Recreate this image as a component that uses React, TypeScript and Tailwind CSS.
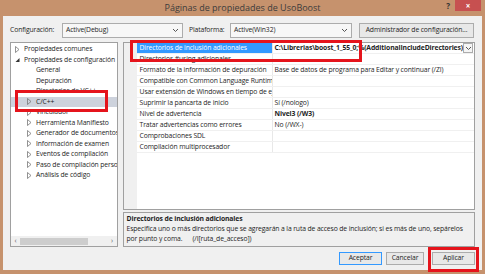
import React from "react";

const font = { fontFamily: '"Open Sans", "Liberation Sans", sans-serif' };

function Chevron() {
  return (
    <svg width="7" height="5" viewBox="0 0 7 5" className="shrink-0">
      <path d="M1 1 L3.5 3.5 L6 1" fill="none" stroke="#555" strokeWidth="1" />
    </svg>
  );
}

function Collapsed() {
  return (
    <svg width="5" height="7" viewBox="0 0 5 7" className="shrink-0">
      <path d="M0.5 0.5 L4 3.5 L0.5 6.5 Z" fill="none" stroke="#777" strokeWidth="0.8" />
    </svg>
  );
}

function Expanded() {
  return (
    <svg width="5" height="7" viewBox="0 0 5 7" className="shrink-0">
      <path d="M4.5 2 L4.5 6 L0.5 6 Z" fill="#333" />
    </svg>
  );
}

const treeItems: { label: string; level: number; kind?: "c" | "e"; selected?: boolean }[] = [
  { label: "Propiedades comunes", level: 0, kind: "c" },
  { label: "Propiedades de configuración", level: 0, kind: "e" },
  { label: "General", level: 1 },
  { label: "Depuración", level: 1 },
  { label: "Directorios de VC++", level: 1 },
  { label: "C/C++", level: 1, kind: "c", selected: true },
  { label: "Vinculador", level: 1, kind: "c" },
  { label: "Herramienta Manifiesto", level: 1, kind: "c" },
  { label: "Generador de documentos XML", level: 1, kind: "c" },
  { label: "Información de examen", level: 1, kind: "c" },
  { label: "Eventos de compilación", level: 1, kind: "c" },
  { label: "Paso de compilación personalizada", level: 1, kind: "c" },
  { label: "Análisis de código", level: 1, kind: "c" },
];

const rows: { name: string; value?: string; bold?: boolean }[] = [
  { name: "Directorios de inclusión adicionales", value: "C:\\Librerias\\boost_1_55_0;%(AdditionalIncludeDirectories)", bold: true },
  { name: "Directorios #using adicionales" },
  { name: "Formato de la información de depuración", value: "Base de datos de programa para Editar y continuar (/ZI)" },
  { name: "Compatible con Common Language Runtime" },
  { name: "Usar extensión de Windows en tiempo de ejecución" },
  { name: "Suprimir la pancarta de inicio", value: "Sí (/nologo)" },
  { name: "Nivel de advertencia", value: "Nivel3 (/W3)", bold: true },
  { name: "Tratar advertencias como errores", value: "No (/WX-)" },
  { name: "Comprobaciones SDL" },
  { name: "Compilación multiprocesador" },
];

export default function App() {
  return (
    <div
      className="relative w-[485px] h-[274px] bg-[#c6926d] px-[3px] pb-[4px] flex flex-col text-[6.8px] tracking-[-0.12px] text-[#1e1e1e] overflow-hidden"
      style={font}
    >
      {/* title bar */}
      <div className="relative h-[16px] shrink-0 flex items-center justify-center">
        <span className="text-[9px] tracking-normal text-[#3c3c3c]">Páginas de propiedades de UsoBoost</span>
        <span className="absolute right-[32px] top-[0px] text-[8px] font-bold text-[#333]">?</span>
        <div className="absolute right-[1px] top-0 w-[26px] h-[11px] bg-[#c75050] flex items-center justify-center">
          <span className="text-white text-[8px] font-bold leading-none">×</span>
        </div>
      </div>

      {/* dialog body */}
      <div className="flex-1 bg-[#f0f0f0] flex flex-col px-[7px] pt-[7px]">
        {/* configuration row */}
        <div className="flex items-center h-[15px]">
          <span className="w-[52px] shrink-0">Configuración:</span>
          <div className="w-[121px] h-[15px] bg-[#f7f7f7] border border-[#acacac] flex items-center justify-between pl-[3px] pr-[3px]">
            <span>Active(Debug)</span>
            <Chevron />
          </div>
          <span className="ml-[6px] w-[41px] shrink-0">Plataforma:</span>
          <div className="w-[122px] h-[15px] bg-[#f7f7f7] border border-[#acacac] flex items-center justify-between pl-[3px] pr-[3px]">
            <span>Active(Win32)</span>
            <Chevron />
          </div>
          <div className="ml-[7px] w-[115px] h-[15px] bg-[#e8e8e8] border border-[#acacac] flex items-center justify-center whitespace-nowrap">
            Administrador de configuración...
          </div>
        </div>

        {/* main area */}
        <div className="flex mt-[4px] gap-[5px]">
          {/* tree */}
          <div className="w-[108px] h-[205px] bg-white border border-[#a0a0a0] flex flex-col overflow-hidden">
            <div className="flex-1 pt-[1px] overflow-hidden">
              {treeItems.map((t) => (
                <div
                  key={t.label}
                  className={`h-[10.5px] flex items-center whitespace-nowrap ${t.selected ? "bg-[#cdd2dc]" : ""}`}
                  style={{ paddingLeft: t.level === 0 ? 4 : 16 }}
                >
                  <span className="w-[9px] shrink-0 flex items-center">
                    {t.kind === "c" ? <Collapsed /> : t.kind === "e" ? <Expanded /> : null}
                  </span>
                  <span className="shrink-0">{t.label}</span>
                </div>
              ))}
            </div>
            <div className="h-[10px] flex items-center bg-[#f0f0f0] shrink-0">
              <span className="w-[9px] text-center text-[7px] text-[#606060]">‹</span>
              <div className="w-[68px] h-[7px] bg-[#cdcdcd]" />
              <div className="flex-1" />
              <span className="w-[9px] text-center text-[7px] text-[#606060]">›</span>
            </div>
          </div>

          {/* grid + description */}
          <div className="w-[354px] flex flex-col gap-[2px]">
            <div className="h-[168px] bg-white border border-[#a0a0a0] flex overflow-hidden">
              <div className="w-[13px] bg-[#f0f0f0] shrink-0" />
              <div className="flex-1 flex flex-col">
                {rows.map((r, i) => (
                  <div key={r.name} className="h-[11px] flex border-b border-[#f0f0f0]">
                    <div
                      className={`w-[136px] shrink-0 border-r border-[#e8e8e8] pl-[3px] flex items-center whitespace-nowrap overflow-hidden ${
                        i === 0 ? "bg-[#3399ff] text-white" : ""
                      }`}
                    >
                      {r.name}
                    </div>
                    <div className="flex-1 flex items-center pl-[2px] whitespace-nowrap overflow-hidden">
                      <span className={r.bold ? "font-bold" : ""}>{r.value ?? ""}</span>
                      {i === 0 && (
                        <div className="ml-auto mr-[1px] w-[10px] h-[10px] border border-[#acacac] bg-[#f5f5f5] flex items-center justify-center shrink-0">
                          <Chevron />
                        </div>
                      )}
                    </div>
                  </div>
                ))}
              </div>
            </div>
            <div className="h-[35px] border border-[#a0a0a0] bg-[#f0f0f0] px-[3px] pt-[1px] leading-[10px] whitespace-nowrap overflow-hidden">
              <div className="font-bold">Directorios de inclusión adicionales</div>
              <div>Especifica uno o más directorios que se agregarán a la ruta de acceso de inclusión; si es más de uno, sepárelos</div>
              <div>
                por punto y coma.<span className="ml-[10px]">(/I[ruta_de_acceso])</span>
              </div>
            </div>
          </div>
        </div>

        {/* buttons */}
        <div className="flex justify-end mt-[5px] gap-[4px]">
          <div className="w-[43px] h-[13px] border border-[#3399ff] bg-[#e8e8e8] flex items-center justify-center">Aceptar</div>
          <div className="w-[38px] h-[13px] border border-[#acacac] bg-[#e8e8e8] flex items-center justify-center">Cancelar</div>
          <div className="ml-[4px] w-[43px] h-[13px] border border-[#acacac] bg-[#e8e8e8] flex items-center justify-center">Aplicar</div>
        </div>
      </div>

      {/* red annotation boxes */}
      <div className="absolute left-[130px] top-[40px] w-[232px] h-[22px] border-[3px] border-[#e5141c]" />
      <div className="absolute left-[15px] top-[90px] w-[93px] h-[22px] border-[3px] border-[#e5141c]" />
      <div className="absolute left-[428px] top-[247px] w-[51px] h-[25px] border-[3px] border-[#e5141c]" />
    </div>
  );
}
